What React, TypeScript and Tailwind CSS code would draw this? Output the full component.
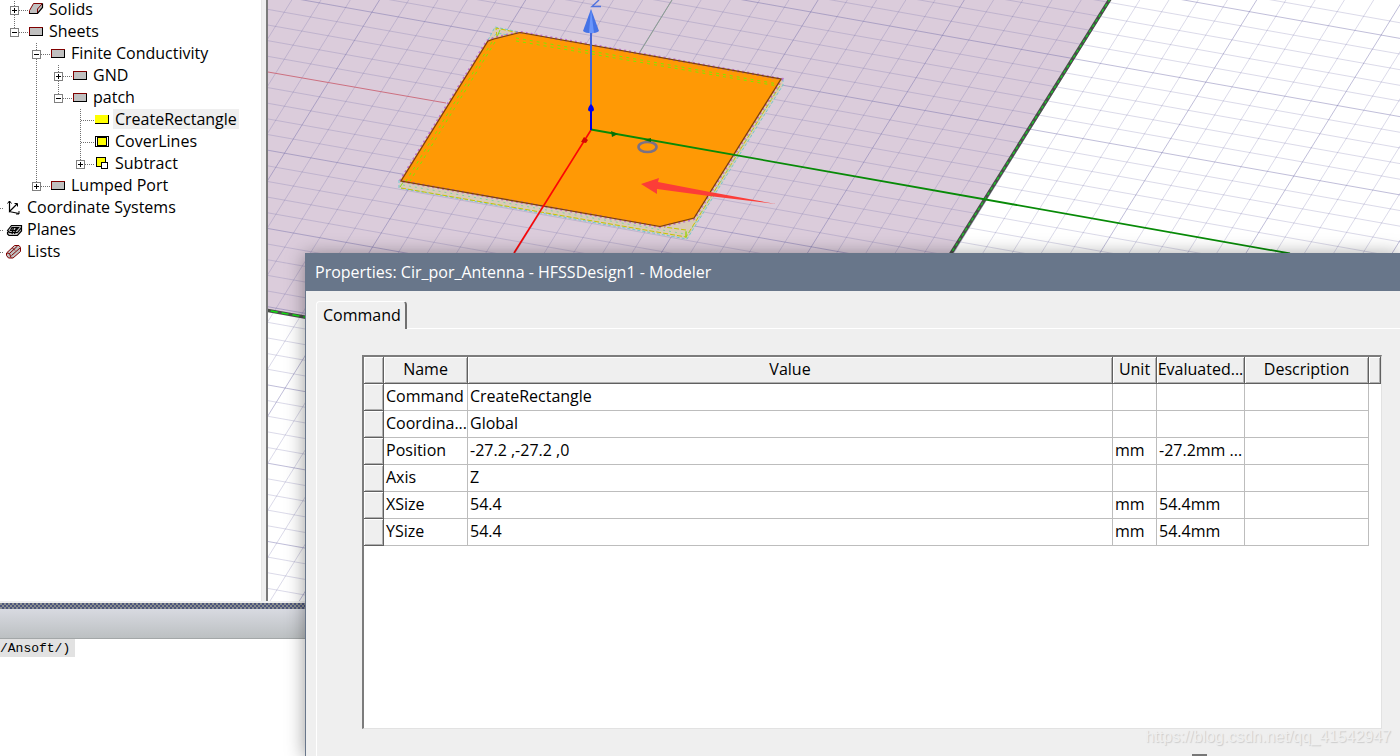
import type { ReactNode } from "react";

type GutterKind = "pass" | "tee" | "end" | "blank";

type TreeRow = {
  label: string;
  icon: IconName;
  guides: GutterKind[];
  toggle?: "plus" | "minus";
  selected?: boolean;
};

type IconName = "solid" | "sheet" | "create" | "cover" | "subtract" | "axes" | "planes" | "lists";

const rows: TreeRow[] = [
  { label: "Solids", icon: "solid", guides: ["tee"], toggle: "plus" },
  { label: "Sheets", icon: "sheet", guides: ["end"], toggle: "minus" },
  { label: "Finite Conductivity", icon: "sheet", guides: ["blank", "tee"], toggle: "minus" },
  { label: "GND", icon: "sheet", guides: ["blank", "pass", "tee"], toggle: "plus" },
  { label: "patch", icon: "sheet", guides: ["blank", "pass", "end"], toggle: "minus" },
  { label: "CreateRectangle", icon: "create", guides: ["blank", "pass", "blank", "tee"], selected: true },
  { label: "CoverLines", icon: "cover", guides: ["blank", "pass", "blank", "tee"] },
  { label: "Subtract", icon: "subtract", guides: ["blank", "pass", "blank", "end"], toggle: "plus" },
  { label: "Lumped Port", icon: "sheet", guides: ["blank", "end"], toggle: "plus" },
  { label: "Coordinate Systems", icon: "axes", guides: [] },
  { label: "Planes", icon: "planes", guides: [] },
  { label: "Lists", icon: "lists", guides: [] },
];

function Gutter({ kind, toggle }: { kind: GutterKind; toggle?: "plus" | "minus" }) {
  return (
    <svg width="22" height="22" className="shrink-0" shapeRendering="crispEdges" aria-hidden="true">
      <g stroke="#707070" strokeDasharray="1 1" fill="none">
        {(kind === "pass" || kind === "tee") && <path d="M11.5 0V22" />}
        {kind === "end" && <path d="M11.5 0V11" />}
        {(kind === "tee" || kind === "end") && <path d="M12 11.5H22" />}
      </g>
      {toggle && (
        <g fill="none">
          <rect x="7.5" y="7.5" width="8" height="8" fill="#fff" stroke="#808080" />
          <path d={toggle === "plus" ? "M9 11.5H14M11.5 9V14" : "M9 11.5H14"} stroke="#000" />
        </g>
      )}
    </svg>
  );
}

const iconShapes: Record<IconName, ReactNode> = {
  solid: (
    <>
      <path d="M8.5 4.5H17.5V8.500L12.500 14.500H4.500V11.500Z" fill="#c0c0c0" />
      <path d="M4.500 14V11.500L8.500 4.500H17.500M12.500 14V10L17 5" fill="none" stroke="#800000" />
      <path d="M17.500 4.500V8.500L12.500 14.500H4" fill="none" stroke="#000" strokeWidth="1.200" />
    </>
  ),
  sheet: (
    <g shapeRendering="crispEdges">
      <rect x="4" y="6" width="14" height="9" fill="#c0c0c0" />
      <path d="M4.5 15V6.5H18" fill="none" stroke="#800000" />
      <path d="M4 14.5H17.5V7" fill="none" stroke="#000" />
    </g>
  ),
  create: (
    <g shapeRendering="crispEdges">
      <rect x="4" y="6" width="13" height="8" fill="#ffff00" />
      <path d="M4 14.5H17.5V6" fill="none" stroke="#000" />
    </g>
  ),
  cover: (
    <g shapeRendering="crispEdges">
      <rect x="4.5" y="5.500" width="13" height="10" fill="#fff" stroke="#000" />
      <rect x="7" y="7" width="8" height="7" fill="#ffff00" />
      <path d="M6.500 6V15M15.500 6V15M6 6.500H16M6 14.500H16" fill="none" stroke="#000" />
    </g>
  ),
  subtract: (
    <g shapeRendering="crispEdges">
      <rect x="5.500" y="4.500" width="9" height="9" fill="#ffff00" stroke="#000" />
      <rect x="10.500" y="9.500" width="6" height="6" fill="#fff" stroke="#000" />
    </g>
  ),
  axes: (
    <g fill="none" stroke="#000">
      <path d="M6.500 4V14.500L14 7M6 14.500L16 16.500" strokeWidth="1.200" />
      <path d="M4.500 6.500L6.500 4L8.500 6.500M11.500 6.500H14.500V9.500M16 14V17H13" />
    </g>
  ),
  planes: (
    <g fill="#c0c0c0" stroke="#000" strokeWidth="1.200">
      <path d="M4.500 13.500L9 9.500H18.500V12L14.500 16.500H6L4.500 15Z" />
      <path d="M4.500 11.500L8.500 6.500H18.500V8.500L14.500 13.500H6.500Z" />
      <path d="M9 8.500H15.500L13 11.500H7.500ZM10.500 8L9 15M13.500 8L11.500 15" fill="none" />
    </g>
  ),
  lists: (
    <g fill="#c0c0c0" stroke="#800000">
      <path d="M3.500 12L11.500 4.500H16L17.500 6.500V10.500L10 17H5.500L3.500 14.500Z" />
      <path d="M4 12L6.500 12.500L8 16.500M6.500 12.500L14.500 5M8.500 14.500L17 7M9.500 7L12 9.500" fill="none" />
    </g>
  ),
};

function TreeIcon({ name }: { name: IconName }) {
  const deep = name === "axes" || name === "planes" || name === "lists";
  return (
    <svg width="22" height="22" className="shrink-0" aria-hidden="true">
      {!deep && <path d="M0 11.500H4" stroke="#707070" strokeDasharray="1 1" shapeRendering="crispEdges" />}
      {iconShapes[name]}
    </svg>
  );
}

function ModelTree() {
  return (
    <nav aria-label="Model tree" className="w-[262px] shrink-0 overflow-hidden border-r border-[#e6e6e6] bg-white">
      <ul className="-mt-px">
        {rows.map((row) => (
          <li key={row.label} className="flex h-[22px] items-start">
            <svg width="3" height="22" className="shrink-0" aria-hidden="true">
              {row.guides.length === 0 && (
                <path d="M0 11.500H3" stroke="#707070" strokeDasharray="1 1" shapeRendering="crispEdges" />
              )}
            </svg>
            {row.guides.map((kind, i) => (
              <Gutter key={i} kind={kind} toggle={i === row.guides.length - 1 ? row.toggle : undefined} />
            ))}
            <TreeIcon name={row.icon} />
            <span className={row.selected ? "bg-[#efefef] px-0.5 leading-5" : "px-0.5 leading-5"}>{row.label}</span>
          </li>
        ))}
      </ul>
    </nav>
  );
}

const AX = 0.1777;
const AY = 0.62;

function Grid() {
  const lines: ReactNode[] = [];
  for (let k = -16; k <= 40; k++) {
    if (k === 0) continue;
    const y = 72 + 15.65 * k;
    lines.push(
      <line key={"a" + k} x1={268} y1={y} x2={2668} y2={y + 2400 * AX} strokeOpacity={k % 5 === 0 ? 0.42 : 0.24} />
    );
  }
  for (let k = -14; k <= 80; k++) {
    const x = 671.9 + 29.24 * k;
    lines.push(
      <line key={"b" + k} x1={x} y1={0} x2={x - 1200 * AY} y2={1200} strokeOpacity={k % 5 === 0 ? 0.42 : 0.24} />
    );
  }
  return <g stroke="#6a64a4">{lines}</g>;
}

function ModelView() {
  return (
    <div className="min-w-0 flex-1 overflow-hidden border-l-2 border-[#7a7a7a] bg-white">
      <svg width="100%" height="100%" role="img" aria-label="3D model view">
        <g transform="translate(-268 0)">
          <path d="M260 0H1110L900 337L850 414L260 309Z" fill="#dbccdb" />
          <Grid />
          <path d="M268 72L446 103" stroke="#cc7080" />
          <path d="M672 0L640 52" stroke="#8ca090" />

          <path d="M1110 -1L850 415M260 309L850 415" stroke="#4a4f4a" strokeWidth="3.500" fill="none" />
          <path d="M1110 -1L850 415" stroke="#10d820" strokeWidth="1.200" strokeDasharray="3 3" />
          <path d="M260 309L850 415" stroke="#10e010" strokeWidth="1.500" strokeDasharray="7 4" />

          <path d="M495 27L519 32L488 40ZM400 181L660 227L694 219L782 79L783 85L687 239L399 188Z" fill="#dacbb8" />
          <path
            d="M488 40L495 27L519 32M399 180V188L687 239L783 85V78M488 43L497 33L519 37"
            fill="none"
            stroke="#6fc9cf"
            strokeDasharray="3 2"
          />
          <path d="M401 188L686 237L781 84M686 237V230L664 227M497 37L496 28L519 33" fill="none" stroke="#c6c400" strokeDasharray="5 2" />
          <path d="M403 185L685 234M689 233L780 86" fill="none" stroke="#82d5a5" strokeDasharray="2 4" />
          <path d="M686 238V231M497 37L500 30M400 187L404 181" stroke="#86dc20" />

          <path d="M487 41L494 38L520 32L782 79L694 219L660 227L400 181Z" fill="#ff9905" />
          <path
            d="M487 41L494 38L520 32L782 79L694 219L660 227L400 181Z"
            fill="none"
            stroke="#b45bcc"
            strokeWidth="2.500"
            strokeDasharray="2 3"
            strokeOpacity="0.8"
          />
          <path d="M488 41L494 39L520 32.500L781 79L694 218L660 226.500L401 181Z" fill="none" stroke="#7a4208" strokeWidth="1.200" />
          <path d="M492 42L406 181M495 42L410 181M516 38L778 84M516 41L778 86" stroke="#7fe800" strokeDasharray="3 4" />

          <path d="M591 130L514 253" stroke="#fb0505" strokeWidth="1.600" />
          <path d="M591 129.500L1290 253.500" stroke="#078a07" strokeWidth="1.800" />
          <path d="M591 129V32" stroke="#4464d6" strokeWidth="2" />
          <path d="M591 130V109" stroke="#0000e0" strokeWidth="2" />
          <path d="M588 110C588 107 590 105 591 104C592 105 594 107 594 110C593 112 589 112 588 110Z" fill="#0000f0" />
          <path d="M611 131L618 134L612 137Z" fill="#067006" />
          <path d="M581 142L584 137L588 140L586 143Z" fill="#d40505" />
          <path d="M591 9L583 31C586 34 596 34 599 31Z" fill="#4573e6" />
          <path d="M591 9L589 33H594Z" fill="#6a95fb" />
          <path d="M599 0L592 6.500H601" fill="none" stroke="#5073df" strokeWidth="1.400" />
          <ellipse cx="647.500" cy="147" rx="9" ry="5" fill="none" stroke="#7b7184" strokeWidth="2.600" />
          <path d="M644 140L651 138V142Z" fill="#067006" />
          <path d="M641 184L659 178L658 182L710 192L776 204L709 196L657 189V194Z" fill="#fc3d38" />
        </g>
      </svg>
    </div>
  );
}

const properties = [
  { name: "Command", value: "CreateRectangle", unit: "", evaluated: "" },
  { name: "Coordina...", value: "Global", unit: "", evaluated: "" },
  { name: "Position", value: "-27.2 ,-27.2 ,0", unit: "mm", evaluated: "-27.2mm ..." },
  { name: "Axis", value: "Z", unit: "", evaluated: "" },
  { name: "XSize", value: "54.4", unit: "mm", evaluated: "54.4mm" },
  { name: "YSize", value: "54.4", unit: "mm", evaluated: "54.4mm" },
];

const headCell =
  "h-[27px] overflow-hidden whitespace-nowrap border-b border-r border-[#606060] bg-[#efefef] px-0 pt-0 pb-0.5 text-center font-normal shadow-[inset_1px_1px_0_#fff,inset_-1px_-1px_0_#b0b0b0]";
const bodyCell = "h-[27px] overflow-hidden whitespace-nowrap border-b border-r border-[#bdbdbd] pt-0 pr-0 pb-0.5 pl-0.5";

function PropertyTable() {
  return (
    <table className="w-full table-fixed border-separate border-spacing-0 leading-6">
      <colgroup>
        <col className="w-5" />
        <col className="w-[84px]" />
        <col />
        <col className="w-11" />
        <col className="w-[88px]" />
        <col className="w-[124px]" />
        <col className="w-3" />
      </colgroup>
      <thead>
        <tr>
          <th className={headCell} aria-label="Row" />
          <th className={headCell}>Name</th>
          <th className={headCell}>Value</th>
          <th className={headCell}>Unit</th>
          <th className={headCell}>Evaluated...</th>
          <th className={headCell}>Description</th>
          <td className={headCell} />
        </tr>
      </thead>
      <tbody>
        {properties.map((p) => (
          <tr key={p.name}>
            <td className={headCell} />
            <td className={bodyCell}>{p.name}</td>
            <td className={bodyCell}>{p.value}</td>
            <td className={bodyCell}>{p.unit}</td>
            <td className={bodyCell}>{p.evaluated}</td>
            <td className={bodyCell} />
            <td />
          </tr>
        ))}
      </tbody>
    </table>
  );
}

function PropertiesDialog() {
  return (
    <section
      aria-label="Properties"
      className="absolute top-[253px] right-0 bottom-0 left-[305px] flex flex-col border-l border-[#68768a] bg-[#efefef] shadow-[0_2px_18px_rgba(0,0,0,0.4)]"
    >
      <header className="flex h-[38px] shrink-0 items-center bg-[#68768a] px-[9px] text-white">
        <h1>Properties: Cir_por_Antenna - HFSSDesign1 - Modeler</h1>
      </header>
      <div className="flex min-h-0 flex-1 flex-col pt-2.5 pl-2.5">
        <div role="tablist" className="flex">
          <button
            role="tab"
            aria-selected="true"
            className="h-7 rounded-t-sm border-t border-r-2 border-l border-t-white border-r-[#707070] border-l-white pr-1 pb-0.5 pl-1.5 leading-6"
          >
            Command
          </button>
          <div className="flex-1 border-b border-white" />
        </div>
        <div role="tabpanel" className="flex min-h-0 flex-1 flex-col border-l border-white pt-[26px] pr-[18px] pb-[27px] pl-[45px]">
          <div className="min-h-0 flex-1 overflow-hidden border-t-2 border-r border-b border-l-2 border-t-[#7c7c7c] border-r-[#e2e2e2] border-b-[#e2e2e2] border-l-[#7c7c7c] bg-white">
            <PropertyTable />
          </div>
        </div>
      </div>
      <div className="absolute right-[193px] bottom-0 h-0.5 w-[15px] bg-[#777777]" />
      <p className="absolute right-[9px] bottom-[7px] font-['Liberation_Sans',sans-serif] text-base leading-6 text-[#efefef] [text-shadow:1px_1px_1px_#cccccc]">
        https://blog.csdn.net/qq_41542947
      </p>
    </section>
  );
}

export default function App() {
  return (
    <main className="relative flex h-screen flex-col overflow-hidden bg-[#efefef] font-['Open_Sans','Noto_Sans',sans-serif] text-base text-black">
      <div className="flex min-h-0 flex-1 gap-1 pb-0.5">
        <ModelTree />
        <ModelView />
      </div>
      <div className="h-1.5 shrink-0 bg-[#858b96] bg-[repeating-conic-gradient(#4c557c_0_25%,#8c9090_0_50%)] bg-size-[4px_4px]" />
      <div className="h-[30px] shrink-0 border-b border-[#a3a7a8] bg-linear-to-b from-[#d8dae1] to-[#bcc0c2]" />
      <div className="h-[117px] shrink-0 bg-white">
        <p className="flex h-[18px] w-[75px] items-center bg-[#e2e2e2] pt-0.5 font-['Liberation_Mono',monospace] text-[13px]">
          /Ansoft/)
        </p>
      </div>
      <PropertiesDialog />
    </main>
  );
}
